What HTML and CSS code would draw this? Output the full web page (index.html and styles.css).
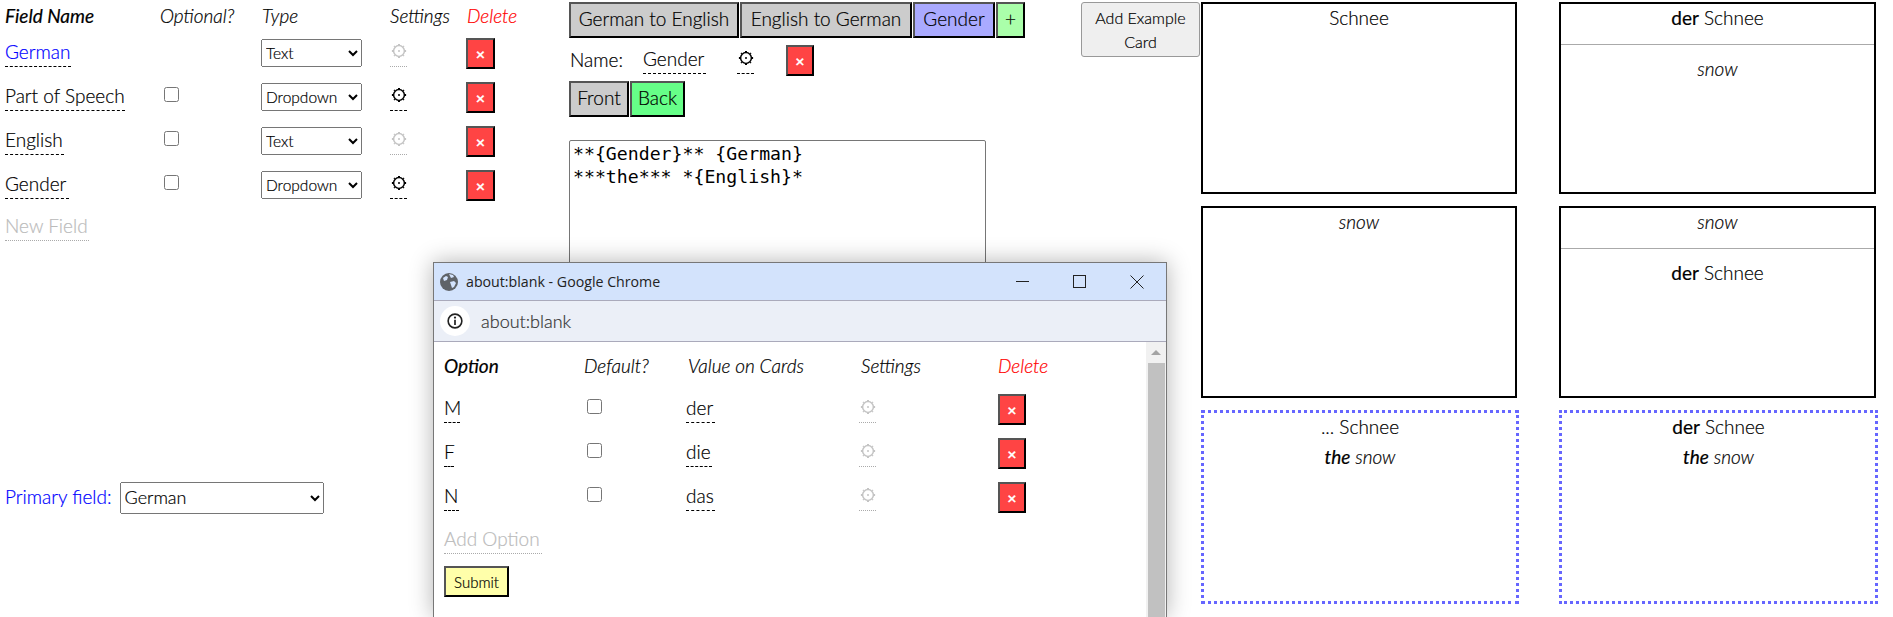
FILE: index.html
```html
<!DOCTYPE html>
<html lang="en">
<head>
    <meta charset="UTF-8">
    <title>Card Type Editor</title>
    <link rel="stylesheet" href="styles.css">
</head>
<body>
    <svg class="defs" width="0" height="0">
        <symbol id="gear" viewBox="0 0 16 16">
            <circle cx="8" cy="8" r="5.4" fill="none" stroke="currentColor" stroke-width="1.5"/>
            <circle cx="8" cy="8" r="1" fill="currentColor"/>
            <path d="M8 .9v2M8 13.1v2M.9 8h2M13.1 8h2" stroke="currentColor" stroke-width="2"/>
            <path d="M3 3l.8.8M13 3l-.8.8M3 13l.8-.8M13 13l-.8-.8" stroke="currentColor" stroke-width="1.4"/>
        </symbol>
    </svg>

    <div class="page">
        <!-- field list -->
        <div class="left">
            <div class="fields">
                <div class="head strong">Field Name</div>
                <div class="head">Optional?</div>
                <div class="head indent">Type</div>
                <div class="head">Settings</div>
                <div class="head indent red">Delete</div>

                <div><span class="field blue w66">German</span></div>
                <div></div>
                <div><select class="small"><option>Text</option></select></div>
                <div><span class="gear off"><svg><use href="#gear"/></svg></span></div>
                <div><button class="del">×</button></div>

                <div><span class="field w120">Part of Speech</span></div>
                <div><input type="checkbox" class="check"></div>
                <div><select class="small"><option>Dropdown</option></select></div>
                <div><span class="gear"><svg><use href="#gear"/></svg></span></div>
                <div><button class="del">×</button></div>

                <div><span class="field w59">English</span></div>
                <div><input type="checkbox" class="check"></div>
                <div><select class="small"><option>Text</option></select></div>
                <div><span class="gear off"><svg><use href="#gear"/></svg></span></div>
                <div><button class="del">×</button></div>

                <div><span class="field w64">Gender</span></div>
                <div><input type="checkbox" class="check"></div>
                <div><select class="small"><option>Dropdown</option></select></div>
                <div><span class="gear"><svg><use href="#gear"/></svg></span></div>
                <div><button class="del">×</button></div>

                <div><span class="field add w84">New Field</span></div>
            </div>
            <div class="primary">
                <label>Primary field:</label>
                <select class="big"><option>German</option></select>
            </div>
        </div>

        <!-- template editor -->
        <div class="middle">
            <div class="tabs">
                <button class="tab t1">German to English</button>
                <button class="tab t2">English to German</button>
                <button class="tab t3 active">Gender</button>
                <button class="tab t4 plus">+</button>
            </div>
            <div class="name-row">
                <span class="name-label">Name:</span>
                <span class="field w63">Gender</span>
                <span class="gear"><svg><use href="#gear"/></svg></span>
                <button class="del">×</button>
            </div>
            <div class="tabs sides">
                <button class="tab t5">Front</button>
                <button class="tab t6 back">Back</button>
            </div>
            <textarea class="template" spellcheck="false">**{Gender}** {German}
***the*** *{English}*</textarea>
        </div>

        <button class="example">Add Example Card</button>

        <!-- card previews -->
        <div class="cards">
            <div class="card">Schnee</div>
            <div class="card"><b>der</b> Schnee<hr><i>snow</i></div>
            <div class="card"><i>snow</i></div>
            <div class="card"><i>snow</i><hr><b>der</b> Schnee</div>
            <div class="card dotted">... Schnee<br><i><b>the</b> snow</i></div>
            <div class="card dotted"><b>der</b> Schnee<br><i><b>the</b> snow</i></div>
        </div>
    </div>

    <!-- popup window -->
    <div class="popup">
        <div class="titlebar">
            <svg class="globe" viewBox="0 0 18 18">
                <circle cx="9" cy="9" r="9" fill="#5f6368"/>
                <path d="M3 5l3-2 2 1-1 3-3 1zM10 9l4-1 2 2-2 4-2 1-1-3zM9 1l4 1 1 2-3 1-1-2z" fill="#d3e3fc"/>
            </svg>
            <span class="title">about:blank - Google Chrome</span>
            <svg class="winbtn" viewBox="0 0 14 14"><path d="M0 6.5h13" stroke="#222" fill="none"/></svg>
            <svg class="winbtn" viewBox="0 0 14 14"><rect x="0.5" y="0.5" width="12" height="12" stroke="#222" fill="none"/></svg>
            <svg class="winbtn" viewBox="0 0 14 14"><path d="M0.5 0.5l13 13M13.5 0.5l-13 13" stroke="#222" fill="none"/></svg>
        </div>
        <div class="addressbar">
            <span class="info">
                <svg viewBox="0 0 14 14" width="16" height="16">
                    <circle cx="7" cy="7" r="6" fill="none" stroke="#222" stroke-width="1.4"/>
                    <path d="M7 6v4.5" stroke="#222" stroke-width="1.5"/>
                    <circle cx="7" cy="4" r="1" fill="#222"/>
                </svg>
            </span>
            <span class="url">about:blank</span>
        </div>
        <div class="popup-body">
            <div class="popup-main">
                <div class="options">
                    <div class="head strong">Option</div>
                    <div class="head">Default?</div>
                    <div class="head indent2">Value on Cards</div>
                    <div class="head indent2">Settings</div>
                    <div class="head red">Delete</div>

                    <div><span class="field w16">M</span></div>
                    <div><input type="checkbox" class="check"></div>
                    <div><span class="field w29">der</span></div>
                    <div><span class="gear off"><svg><use href="#gear"/></svg></span></div>
                    <div><button class="del">×</button></div>

                    <div><span class="field w10">F</span></div>
                    <div><input type="checkbox" class="check"></div>
                    <div><span class="field w26">die</span></div>
                    <div><span class="gear off"><svg><use href="#gear"/></svg></span></div>
                    <div><button class="del">×</button></div>

                    <div><span class="field w15">N</span></div>
                    <div><input type="checkbox" class="check"></div>
                    <div><span class="field w29">das</span></div>
                    <div><span class="gear off"><svg><use href="#gear"/></svg></span></div>
                    <div><button class="del">×</button></div>

                    <div><span class="field add w98">Add Option</span></div>
                </div>
                <button class="submit">Submit</button>
            </div>
            <div class="scrollbar">
                <span class="arrow"></span>
                <span class="thumb"></span>
            </div>
        </div>
    </div>
</body>
</html>
```

FILE: styles.css
```css
*{
    box-sizing: border-box;
}
html,body{
    margin: 0;
    height: 100%;
    overflow: hidden;
}
body{
    background-color: #fff;
    color: #000;
    font-family: "Lato", "Liberation Sans", sans-serif;
    font-weight: 300;
    font-size: 19px;
    /* Lato light comes out too pale, this darkens the strokes */
    -webkit-text-stroke: .2px;
}
.defs{
    position: absolute;
}
button,select,textarea{
    font-family: inherit;
}
.page{
    display: flex;
    align-items: flex-start;
}

/* field list */
.left{
    width: 569px;
    padding-left: 5px;
    flex: none;
}
.fields{
    display: grid;
    grid-template-columns: 155px 101px 129px 76px auto;
    grid-template-rows: 31px;
    grid-auto-rows: 44px;
}
.fields > div,
.options > div{
    display: flex;
    align-items: center;
}
.fields > .head{
    padding-top: 0;
}
.head{
    font-style: italic;
    padding-top: 2px;
}
.strong{
    font-weight: 400;
}
.indent{
    padding-left: 1px;
}
.indent2{
    padding-left: 2px;
}
.red{
    color: #f00;
}
.blue{
    color: #00f;
}

/* editable text with dashed line under it */
.field{
    display: inline-block;
    height: 28px;
    line-height: 25px;
    border-bottom: 1px dashed #000;
    white-space: nowrap;
}
.field.add{
    margin-bottom: 4px;
    color: #bbb;
    border-bottom: 1px dotted #aaa;
}
.options .field.add{
    margin-bottom: 2px;
}
.w10{ width: 10px; }
.w15{ width: 15px; }
.w16{ width: 16px; }
.w26{ width: 26px; }
.w29{ width: 29px; }
.w59{ width: 59px; }
.w63{ width: 63px; }
.w64{ width: 64px; }
.w66{ width: 66px; }
.w84{ width: 84px; }
.w98{ width: 98px; }
.w120{ width: 120px; }

.gear{
    display: inline-flex;
    align-items: center;
    justify-content: center;
    width: 17px;
    height: 28px;
    padding-bottom: 3px;
    border-bottom: 1px dashed #000;
}
.gear svg{
    width: 16px;
    height: 16px;
}
.gear.off{
    color: #c4c4c4;
    border-bottom: 1px dotted #aaa;
}
.check{
    width: 15px;
    height: 15px;
    margin: 0 0 5px 4px;
}
.del{
    width: 29px;
    height: 31px;
    padding: 2px 0 0;
    border-style: solid;
    border-width: 2px;
    border-color: #555 #000 #000 #555;
    background-color: #f44;
    color: #fff;
    font-size: 16px;
    font-weight: 700;
    line-height: 1;
}
select.small{
    width: 101px;
    height: 28px;
    font-size: 15.5px;
    font-weight: 300;
}
.primary{
    display: flex;
    align-items: center;
    gap: 8px;
    margin-top: 231px;
    color: #00f;
}
.primary label{
    margin-bottom: 3px;
}
select.big{
    width: 204px;
    height: 32px;
    padding-bottom: 2px;
    font-size: 18px;
    font-weight: 300;
    color: #000;
}

/* template editor */
.middle{
    width: 512px;
    flex: none;
    padding-top: 2px;
}
.tabs{
    display: flex;
    gap: 1px;
}
.tab{
    height: 36px;
    padding: 0 0 3px;
    border-style: solid;
    border-width: 2px;
    border-color: #555 #000 #000 #555;
    background-color: #ccc;
    color: #000;
    font-size: 19px;
    font-weight: 300;
}
.t1{ width: 170px; }
.t2{ width: 172px; }
.t3{ width: 82px; }
.t4{ width: 29px; }
.t5{ width: 60px; }
.t6{ width: 55px; }
.active{
    background-color: #aaf;
}
.plus{
    background-color: #afa;
}
.back{
    background-color: #6f8;
}
.name-row{
    display: flex;
    align-items: center;
    height: 30px;
    margin-top: 7px;
    padding-left: 1px;
}
.name-label{
    width: 73px;
    margin-bottom: 2px;
}
.name-row .gear{
    margin-left: 31px;
}
.name-row .del{
    width: 28px;
    margin-left: 32px;
}
.sides{
    margin-top: 6px;
}
.template{
    display: block;
    width: 417px;
    height: 210px;
    margin-top: 23px;
    padding: 1px 3px;
    border: 1px solid #767676;
    border-radius: 2px;
    resize: none;
    font-family: "DejaVu Sans Mono", "Liberation Mono", monospace;
    font-size: 18.2px;
    font-weight: 400;
    line-height: 23px;
    -webkit-text-stroke: 0;
}

.example{
    width: 119px;
    height: 55px;
    flex: none;
    margin-top: 2px;
    padding: 0 6px;
    border: 1px solid #999;
    border-radius: 3px;
    background-color: #efefef;
    color: #000;
    font-size: 16px;
    font-weight: 300;
    line-height: 24px;
}

/* card previews */
.cards{
    display: grid;
    grid-template-columns: 318px 317px;
    grid-template-rows: 192px 192px 194px;
    column-gap: 40px;
    row-gap: 12px;
    margin: 2px 0 0 1px;
}
.card{
    width: 316px;
    border: 2px solid #000;
    text-align: center;
    line-height: 28px;
}
.card:nth-child(even){
    width: 317px;
}
.card b{
    font-weight: 400;
}
.card hr{
    height: 1px;
    margin: 12px 0 10px;
    border: 0;
    background-color: #aaa;
}
.card.dotted{
    width: 318px;
    line-height: 27px;
    border: 3px dotted #66f;
}
.card.dotted:nth-child(even){
    width: 319px;
}
.card.dotted i{
    display: inline-block;
    margin-top: 3px;
}

/* popup window, it floats over the page */
.popup{
    position: absolute;
    left: 433px;
    top: 262px;
    bottom: 0;
    width: 734px;
    display: flex;
    flex-direction: column;
    border: 1px solid #777;
    border-bottom: 0;
    background-color: #fff;
    box-shadow: 0 0 22px rgba(0,0,0,.3);
}
.titlebar{
    display: flex;
    align-items: center;
    height: 38px;
    flex: none;
    padding-left: 6px;
    background-color: #d3e3fc;
    border-bottom: 1px solid #aab;
}
.globe{
    width: 18px;
    height: 18px;
}
.title{
    flex: 1;
    margin-left: 8px;
    font-family: "Open Sans", sans-serif;
    font-weight: 400;
    font-size: 14.2px;
    color: #222;
    -webkit-text-stroke: 0;
}
.winbtn{
    width: 14px;
    height: 14px;
    margin-right: 43px;
}
.winbtn:last-child{
    margin-right: 22px;
}
.addressbar{
    display: flex;
    align-items: center;
    height: 41px;
    flex: none;
    padding-left: 6px;
    background-color: #ebeff7;
    border-bottom: 1px solid #aab;
}
.info{
    display: flex;
    align-items: center;
    justify-content: center;
    width: 30px;
    height: 30px;
    border-radius: 50%;
    background-color: #fff;
}
.url{
    margin-left: 11px;
    font-size: 18px;
    font-weight: 300;
    color: #333;
}
.popup-body{
    display: flex;
    flex: 1;
    min-height: 0;
}
.popup-main{
    flex: 1;
    padding-left: 10px;
}
.options{
    display: grid;
    grid-template-columns: 140px 102px 173px 139px auto;
    grid-template-rows: 45px;
    grid-auto-rows: 44px;
}
.options .check{
    margin-left: 3px;
}
.options .del{
    width: 28px;
}
.submit{
    display: block;
    width: 65px;
    height: 31px;
    margin-top: 3px;
    padding: 0;
    border-style: solid;
    border-width: 2px;
    border-color: #555 #000 #000 #555;
    background-color: #ffa;
    color: #000;
    font-size: 15px;
    font-weight: 300;
}
.scrollbar{
    width: 20px;
    flex: none;
    display: flex;
    flex-direction: column;
    align-items: center;
    background-color: #f1f1f1;
}
.arrow{
    width: 0;
    height: 0;
    margin: 8px 0 8px;
    border-left: 5px solid transparent;
    border-right: 5px solid transparent;
    border-bottom: 5px solid #a3a3a3;
}
.thumb{
    width: 17px;
    flex: 1;
    background-color: #c1c1c1;
}
```
